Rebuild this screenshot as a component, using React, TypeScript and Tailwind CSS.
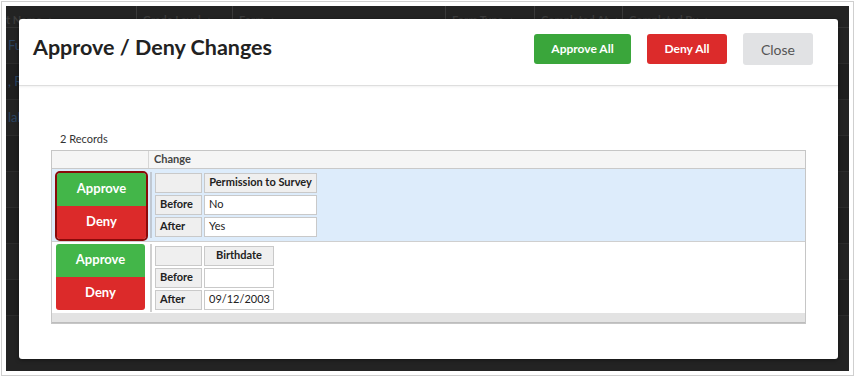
import React from 'react';

function BgHeader() {
  const cols = [
    { label: 't Name ▲', w: 'w-[130px]' },
    { label: 'Grade Level ▲', w: 'w-[96px]' },
    { label: 'Form ▲', w: 'w-[213px]' },
    { label: 'Form Type ▲', w: 'w-[89px]' },
    { label: 'Completed At ▲', w: 'w-[88px]' },
    { label: 'Completed By ▲', w: 'flex-1' },
  ];
  return (
    <div className="flex h-[22px] border-b border-[#333]">
      {cols.map((c, i) => (
        <div
          key={i}
          className={`${c.w} ${i > 0 ? 'border-l border-[#3a3a3a] pl-[6px]' : ''} pt-[6px] text-[11px] font-bold text-[#3c3c3c] whitespace-nowrap`}
        >
          {c.label}
        </div>
      ))}
    </div>
  );
}

function BgRows() {
  const rows = ['Fu', ', R', 'lal', '', '', '', '', ''];
  return (
    <div className="flex flex-col">
      {rows.map((r, i) => (
        <div
          key={i}
          className={`h-[36px] border-b border-[#2c2c2c] ${i % 2 === 0 ? 'bg-[#232323]' : 'bg-[#1f1f1f]'} flex items-center px-[2px] text-[13px] text-[#2a4462]`}
        >
          {r}
        </div>
      ))}
    </div>
  );
}

function Cell({ children, head, w }: { children?: React.ReactNode; head?: boolean; w: string }) {
  return (
    <div
      className={`${w} h-[20px] border border-[#c9c9c9] px-[4px] flex items-center text-[11px] text-[#222] ${head ? 'bg-[#efefef] font-bold' : 'bg-white'}`}
    >
      {children}
    </div>
  );
}

function ChangeGrid({ field, before, after, w }: { field: string; before: string; after: string; w: string }) {
  return (
    <div className="flex flex-col gap-[2px]">
      <div className="flex gap-[2px]">
        <Cell head w="w-[47px]" />
        <Cell head w={w}>
          <span className="w-full text-center">{field}</span>
        </Cell>
      </div>
      <div className="flex gap-[2px]">
        <Cell head w="w-[47px]">Before</Cell>
        <Cell w={w}>{before}</Cell>
      </div>
      <div className="flex gap-[2px]">
        <Cell head w="w-[47px]">After</Cell>
        <Cell w={w}>{after}</Cell>
      </div>
    </div>
  );
}

function Actions({ focused }: { focused?: boolean }) {
  return (
    <div
      className={`flex flex-col w-[89px] overflow-hidden rounded-[3px] ${focused ? 'outline-2 outline-[#8a0a0a] outline-offset-0' : ''}`}
    >
      <button className="h-[33px] bg-[#43b649] text-white text-[13px] font-bold">Approve</button>
      <button className="h-[33px] bg-[#dc2a2a] text-white text-[13px] font-bold">Deny</button>
    </div>
  );
}

export default function App() {
  return (
    <div className="w-[855px] h-[379px] bg-white p-[1px]" style={{ fontFamily: 'Lato, "Open Sans", sans-serif' }}>
      <div className="h-[375px] border border-[#cfcfcf] p-[4px]">
        <div className="relative h-[365px] bg-[#232323] overflow-hidden">
          <BgHeader />
          <BgRows />

          <div className="absolute left-[13px] top-[13px] w-[819px] h-[340px] bg-white rounded-[3px] shadow-[0_1px_4px_rgba(0,0,0,0.4)] flex flex-col">
            <div className="h-[67px] flex items-center justify-between pl-[14px] pr-[25px] border-b border-[#dedede] shadow-[0_1px_2px_rgba(0,0,0,0.06)]">
              <h1 className="text-[21.5px] font-bold text-[#222] -mt-[9px]">Approve / Deny Changes</h1>
              <div className="flex items-center gap-[16px] -mt-[6px]">
                <button className="w-[97px] h-[30px] rounded-[3px] bg-[#3aa63b] text-white text-[12px] font-bold">
                  Approve All
                </button>
                <button className="w-[80px] h-[30px] rounded-[3px] bg-[#dc2b2b] text-white text-[12px] font-bold">
                  Deny All
                </button>
                <button className="w-[70px] h-[32px] rounded-[3px] bg-[#e1e2e4] text-[#555] text-[14px]">
                  Close
                </button>
              </div>
            </div>

            <div className="px-[32px] pt-[45px]">
              <div className="pl-[9px] text-[11px] text-[#333] mb-[2px]">2 Records</div>
              <div className="border border-[#c6c6c6]">
                <div className="flex h-[18px] bg-[#f5f5f5] border-b border-[#c9c9c9]">
                  <div className="w-[97px] border-r border-[#d6d6d6]" />
                  <div className="pl-[5px] flex items-center text-[11px] font-bold text-[#444]">Change</div>
                </div>

                <div className="flex h-[73px] bg-[#ddecfb] border-b border-[#cfcfcf]">
                  <div className="w-[97px] pl-[5px] pt-[4px]">
                    <Actions focused />
                  </div>
                  <div className="flex pt-[4px] pl-[1px]">
                    <div className="w-[2px] h-[66px] border-l border-r border-[#c0c8d2] mr-[3px] -mt-[1px]" />
                    <ChangeGrid field="Permission to Survey" before="No" after="Yes" w="w-[113px]" />
                  </div>
                </div>

                <div className="flex h-[71px] bg-white">
                  <div className="w-[97px] pl-[4px] pt-[2px]">
                    <Actions />
                  </div>
                  <div className="flex pt-[4px] pl-[1px]">
                    <div className="w-[2px] h-[68px] border-l border-r border-[#d0d0d0] mr-[3px] -mt-[2px]" />
                    <ChangeGrid field="Birthdate" before="" after="09/12/2003" w="w-[70px]" />
                  </div>
                </div>

                <div className="h-[10px] bg-[#e3e3e3] border-b border-[#bdbdbd]" />
              </div>
            </div>
          </div>
        </div>
      </div>
    </div>
  );
}
